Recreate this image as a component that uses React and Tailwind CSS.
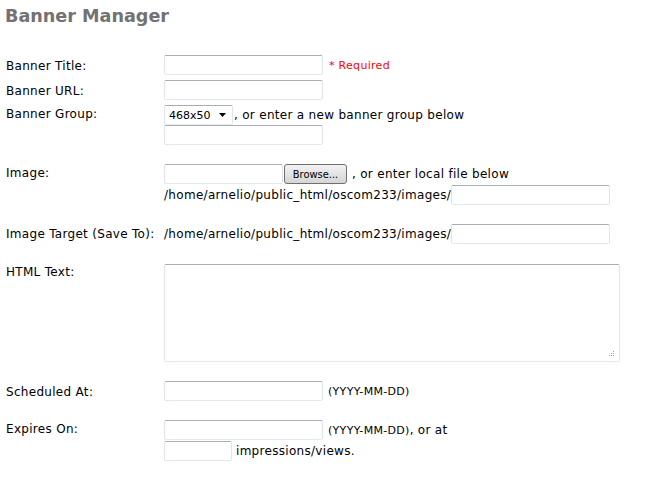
export default function App() {
  const inp = "h-[20px] border border-[#e2e3ea] border-t-[#abadb3] border-b-[#e3e9ef] rounded-[2px] bg-white box-border shrink-0";
  return (
    <div className="w-[668px] h-[487px] bg-white text-[12px] leading-[15px] tracking-[0.3px] text-black" style={{ fontFamily: 'Verdana, "DejaVu Sans", sans-serif' }}>
      <div className="pl-[5px] pt-[5px] text-[17.6px] leading-[22px] tracking-normal font-bold text-[#727272]">Banner Manager</div>
      <div className="pl-[6px] pt-[28px]">
        {/* Banner Title */}
        <div className="flex">
          <div className="w-[158px] pt-[4px] shrink-0">Banner Title:</div>
          <div className={`${inp} w-[159px]`} />
          <div className="pl-[6px] pt-[5px] text-[11px] leading-[12px] text-[#ff0000]">* Required</div>
        </div>
        {/* Banner URL */}
        <div className="flex mt-[5px]">
          <div className="w-[158px] pt-[4px] shrink-0">Banner URL:</div>
          <div className={`${inp} w-[159px]`} />
        </div>
        {/* Banner Group */}
        <div className="flex mt-[5px]">
          <div className="w-[158px] pt-[2px] shrink-0">Banner Group:</div>
          <div className="flex flex-col">
            <div className="flex items-center">
              <div className={`${inp} w-[69px] flex items-center justify-between pl-[4px] pr-[6px] text-[11px] tracking-normal`}>
                <span>468x50</span>
                <svg width="7" height="4" viewBox="0 0 7 4"><path d="M0 0h7L3.5 4z" fill="#000" /></svg>
              </div>
              <span className="pl-[1px]">, or enter a new banner group below</span>
            </div>
            <div className={`${inp} w-[159px]`} />
          </div>
        </div>
        {/* Image */}
        <div className="flex mt-[19px]">
          <div className="w-[158px] pt-[2px] shrink-0">Image:</div>
          <div className="flex flex-col">
            <div className="flex items-center">
              <div className={`${inp} w-[119px]`} />
              <div className="ml-[1px] h-[20px] w-[63px] rounded-[3px] border border-[#707070] bg-gradient-to-b from-[#f2f2f2] to-[#d6d6d6] flex items-center justify-center text-[11px] tracking-normal" style={{ fontFamily: 'Tahoma, "DejaVu Sans Condensed", "DejaVu Sans", sans-serif' }}>Browse...</div>
              <span className="pl-[5px]">, or enter local file below</span>
            </div>
            <div className="flex items-center mt-[1px]">
              <span>/home/arnelio/public_html/oscom233/images/</span>
              <div className={`${inp} w-[159px]`} />
            </div>
          </div>
        </div>
        {/* Image Target */}
        <div className="flex items-center mt-[19px]">
          <div className="w-[158px] shrink-0">Image Target (Save To):</div>
          <span>/home/arnelio/public_html/oscom233/images/</span>
          <div className={`${inp} w-[159px]`} />
        </div>
        {/* HTML Text */}
        <div className="flex mt-[20px]">
          <div className="w-[158px] pt-[1px] shrink-0">HTML Text:</div>
          <div className="relative w-[456px] h-[98px] border border-[#e2e3ea] border-t-[#abadb3] border-b-[#e3e9ef] rounded-[2px] bg-white">
            <svg className="absolute right-[4px] bottom-[4px]" width="7" height="7" viewBox="0 0 7 7">
              <rect x="5" y="1" width="1" height="1" fill="#9a9a9a" />
              <rect x="3" y="3" width="1" height="1" fill="#9a9a9a" />
              <rect x="5" y="3" width="1" height="1" fill="#9a9a9a" />
              <rect x="1" y="5" width="1" height="1" fill="#9a9a9a" />
              <rect x="3" y="5" width="1" height="1" fill="#9a9a9a" />
              <rect x="5" y="5" width="1" height="1" fill="#9a9a9a" />
            </svg>
          </div>
        </div>
        {/* Scheduled At */}
        <div className="flex mt-[19px]">
          <div className="w-[158px] pt-[4px] shrink-0">Scheduled At:</div>
          <div className={`${inp} w-[159px]`} />
          <div className="pl-[5px] pt-[5px] text-[11px] leading-[12px]">(YYYY-MM-DD)</div>
        </div>
        {/* Expires On */}
        <div className="flex mt-[19px]">
          <div className="w-[158px] pt-[2px] shrink-0">Expires On:</div>
          <div className="flex flex-col">
            <div className="flex items-center">
              <div className={`${inp} w-[159px]`} />
              <span className="pl-[5px] text-[11px]">(YYYY-MM-DD)</span>
              <span>, or at</span>
            </div>
            <div className="flex items-center mt-[1px]">
              <div className={`${inp} w-[68px]`} />
              <span className="pl-[4px]">impressions/views.</span>
            </div>
          </div>
        </div>
      </div>
    </div>
  );
}
